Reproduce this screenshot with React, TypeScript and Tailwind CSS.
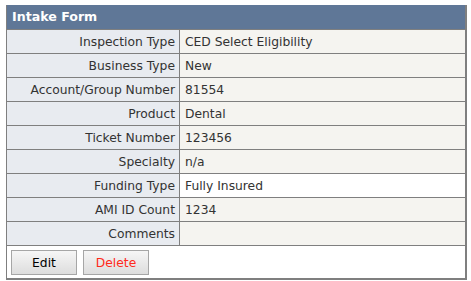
import React from "react";

const rows: { label: string; value: string; white?: boolean }[] = [
  { label: "Inspection Type", value: "CED Select Eligibility" },
  { label: "Business Type", value: "New" },
  { label: "Account/Group Number", value: "81554" },
  { label: "Product", value: "Dental" },
  { label: "Ticket Number", value: "123456" },
  { label: "Specialty", value: "n/a" },
  { label: "Funding Type", value: "Fully Insured", white: true },
  { label: "AMI ID Count", value: "1234" },
  { label: "Comments", value: "" },
];

export default function App() {
  return (
    <div className="w-[471px] h-[281px] bg-white pt-[5px] pl-[6px]" style={{ fontFamily: "'DejaVu Sans', Verdana, sans-serif" }}>
      <div className="w-[461px] border-l border-r-2 border-b-2 border-[#7f7f7f] bg-white">
        <div className="h-[25px] bg-[#5f7797] border-b border-[#7f7f7f] pl-[5px] pt-[1px] flex items-center text-white font-bold text-[12.6px] leading-none">
          Intake Form
        </div>
        {rows.map((r) => (
          <div key={r.label} className="grid grid-cols-[173px_1fr] h-[24px] border-b border-[#7f7f7f]">
            <div className="bg-[#e8ebf0] border-r border-[#7f7f7f] text-right pr-[4px] pt-[1px] flex items-center justify-end text-[12.3px] text-[#333333] leading-none">
              {r.label}
            </div>
            <div className={`${r.white ? "bg-white" : "bg-[#f5f4f0]"} pl-[5px] pt-[1px] flex items-center text-[12.3px] text-[#333333] leading-none`}>
              {r.value}
            </div>
          </div>
        ))}
        <div className="h-[32px] flex items-start gap-[6px] pt-[4px] pl-[4px]">
          <button className="w-[66px] h-[25px] pt-[1px] border border-[#a6a6a6] bg-gradient-to-b from-[#f6f6f6] to-[#dddddd] text-[12.3px] text-black leading-none">
            Edit
          </button>
          <button className="w-[66px] h-[25px] pt-[1px] border border-[#a6a6a6] bg-gradient-to-b from-[#f6f6f6] to-[#dddddd] text-[12.3px] text-[#ff2a1a] leading-none">
            Delete
          </button>
        </div>
      </div>
    </div>
  );
}
